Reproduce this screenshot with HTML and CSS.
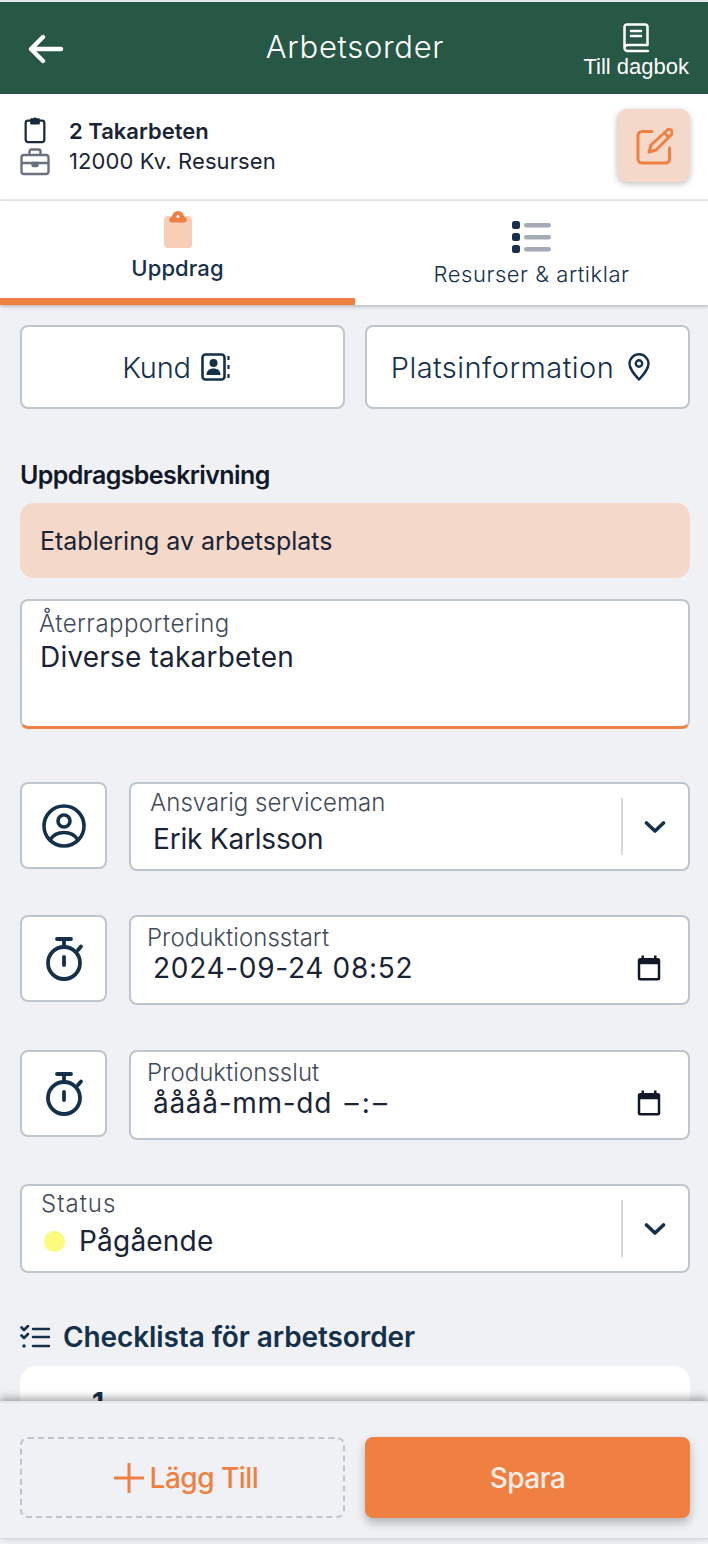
FILE: index.html
```html
<!DOCTYPE html>
<html lang="sv">
<head>
<meta charset="utf-8">
<title>Arbetsorder</title>
<link rel="stylesheet" href="styles.css">
</head>
<body>
<div class="app">
  <header class="topbar">
    <svg class="back" viewBox="0 0 36 30" fill="none" stroke="#fff" stroke-width="4.400" stroke-linecap="round" stroke-linejoin="round"><path d="M33 15H3M15 3 3 15l12 12"/></svg>
    <h1>Arbetsorder</h1>
    <div class="diary">
      <svg viewBox="0 0 26 30" fill="none" stroke="#fff" stroke-width="2.500" stroke-linecap="round" stroke-linejoin="round"><path d="M1.500 24V4a2.500 2.500 0 0 1 2.500-2.500h18a2.500 2.500 0 0 1 2.500 2.500v18H5a3 3 0 0 0-3.500 3 3 3 0 0 0 3.500 3h20M8 8h10M8 13h10"/></svg>
      <span>Till dagbok</span>
    </div>
  </header>

  <section class="info">
    <div class="info-icons">
      <svg class="ic-clip" viewBox="0 0 24 30" fill="none" stroke="#1a2b3c" stroke-width="2.400" stroke-linejoin="round"><rect x="2" y="5" width="20" height="23" rx="2.500"/><path d="M8 3.500h2.500a2 2 0 0 1 3 0H16V8H8z" fill="#1a2b3c"/></svg>
      <svg class="ic-case" viewBox="0 0 30 28" fill="none" stroke="#69717f" stroke-width="2.400" stroke-linejoin="round"><rect x="1.500" y="7" width="27" height="19" rx="2.500"/><path d="M9.500 7V3.500a2 2 0 0 1 2-2h7a2 2 0 0 1 2 2V7M1.500 15h27"/><path d="M12.500 15h5v2a1 1 0 0 1-1 1h-3a1 1 0 0 1-1-1z" fill="#69717f"/></svg>
    </div>
    <div class="info-text">
      <div class="info-title">2 Takarbeten</div>
      <div class="info-sub">12000 Kv. Resursen</div>
    </div>
    <button class="edit">
      <svg viewBox="0 0 38 38" fill="none" stroke="#f08042" stroke-width="3" stroke-linecap="round" stroke-linejoin="round"><path d="M17 4.500H7a4 4 0 0 0-4 4V32a4 4 0 0 0 4 4h23.500a4 4 0 0 0 4-4V21"/><path d="M33 2.500a3.200 3.200 0 0 1 3.500 5L21 23l-7 2 2-7z"/><path d="M29.500 6l3.500 3.500"/></svg>
    </button>
  </section>

  <nav class="tabs">
    <div class="tab active">
      <svg class="tab-clip" viewBox="0 0 28 38"><rect x="0" y="5" width="28" height="32" rx="4" fill="#f9ceb6"/><path d="M8 11.500a2.500 2.500 0 0 1 0-5.500a6 6 0 0 1 12 0a2.500 2.500 0 0 1 0 5.500z" fill="#f08042"/><circle cx="14" cy="5.500" r="1.500" fill="#fff"/></svg>
      <span>Uppdrag</span>
    </div>
    <div class="tab">
      <svg class="tab-list" viewBox="0 0 39 32"><g fill="#14304a"><rect x="0" y="0" width="8" height="8" rx="2.500"/><rect x="0" y="12" width="8" height="8" rx="2.500"/><rect x="0" y="24" width="8" height="8" rx="2.500"/></g><g fill="#a3acb4"><rect x="12" y="2" width="27" height="4.500" rx="2.200"/><rect x="12" y="14" width="27" height="4.500" rx="2.200"/><rect x="12" y="26" width="27" height="4.500" rx="2.200"/></g></svg>
      <span>Resurser &amp; artiklar</span>
    </div>
  </nav>

  <main class="content">
    <div class="two">
      <button class="link-btn">
        <span>Kund</span>
        <svg class="ic-book" viewBox="0 0 30 28" fill="none"><rect x="1.500" y="1.500" width="22" height="25" rx="3" stroke="#14304a" stroke-width="2.600"/><circle cx="12.500" cy="10" r="4" fill="#14304a"/><path d="M5.500 22c0-4.500 3-6.500 7-6.500s7 2 7 6.500z" fill="#14304a"/><path d="M27.500 3v4M27.500 12v4M27.500 21v4" stroke="#14304a" stroke-width="2.200"/></svg>
      </button>
      <button class="link-btn">
        <span>Platsinformation</span>
        <svg class="ic-pin" viewBox="0 0 22 28" fill="none" stroke="#14304a" stroke-width="2.400"><path d="M11 26.500C6 21 1.500 16 1.500 10.800a9.500 9.500 0 0 1 19 0C20.500 16 16 21 11 26.500z" stroke-linejoin="round"/><circle cx="11" cy="10.500" r="3.200"/></svg>
      </button>
    </div>

    <h2 class="section-title">Uppdragsbeskrivning</h2>
    <div class="alert">Etablering av arbetsplats</div>

    <div class="textarea">
      <div class="label">Återrapportering</div>
      <div class="value">Diverse takarbeten</div>
    </div>

    <div class="row row-person">
      <div class="icon-box">
        <svg viewBox="0 0 44 44" class="ic-user" fill="none" stroke="#14304a" stroke-width="3.600"><circle cx="22" cy="22" r="20"/><circle cx="22" cy="17" r="6"/><path d="M8 36c3-5 8-7.500 14-7.500S33 31 36 36"/></svg>
      </div>
      <div class="field select">
        <div class="field-body">
          <div class="label">Ansvarig serviceman</div>
          <div class="value">Erik Karlsson</div>
        </div>
        <div class="sep"></div>
        <svg class="chev" viewBox="0 0 22 14" fill="none" stroke="#14304a" stroke-width="3.600" stroke-linecap="round" stroke-linejoin="round"><path d="M2.500 3 11 11l8.500-8"/></svg>
      </div>
    </div>

    <div class="row row-date">
      <div class="icon-box">
        <svg viewBox="0 0 38 44" class="ic-timer" fill="none" stroke="#14304a" stroke-width="3.800" stroke-linecap="round"><circle cx="18" cy="26" r="16"/><path d="M11 2h14M18 2v8M32 13l3-3.500M18 20v8" /></svg>
      </div>
      <div class="field date">
        <div class="label">Produktionsstart</div>
        <div class="date-line">
          <span class="value mono">2024-09-24 08:52</span>
          <svg class="cal" viewBox="0 0 24 24" fill="#111827"><path d="M19 4h-1V2h-2v2H8V2H6v2H5a2 2 0 0 0-2 2v14a2 2 0 0 0 2 2h14a2 2 0 0 0 2-2V6a2 2 0 0 0-2-2zm0 16H5V9h14z"/></svg>
        </div>
      </div>
    </div>

    <div class="row row-date">
      <div class="icon-box">
        <svg viewBox="0 0 38 44" class="ic-timer" fill="none" stroke="#14304a" stroke-width="3.800" stroke-linecap="round"><circle cx="18" cy="26" r="16"/><path d="M11 2h14M18 2v8M32 13l3-3.500M18 20v8" /></svg>
      </div>
      <div class="field date">
        <div class="label">Produktionsslut</div>
        <div class="date-line">
          <span class="value mono">åååå-mm-dd <span class="time-empty">–:–</span></span>
          <svg class="cal" viewBox="0 0 24 24" fill="#111827"><path d="M19 4h-1V2h-2v2H8V2H6v2H5a2 2 0 0 0-2 2v14a2 2 0 0 0 2 2h14a2 2 0 0 0 2-2V6a2 2 0 0 0-2-2zm0 16H5V9h14z"/></svg>
        </div>
      </div>
    </div>

    <div class="field select status">
      <div class="field-body">
        <div class="label">Status</div>
        <div class="status-line"><i class="dot"></i><span class="value">Pågående</span></div>
      </div>
      <div class="sep"></div>
      <svg class="chev" viewBox="0 0 22 14" fill="none" stroke="#14304a" stroke-width="3.600" stroke-linecap="round" stroke-linejoin="round"><path d="M2.500 3 11 11l8.500-8"/></svg>
    </div>

    <h2 class="check-title">
      <svg viewBox="0 0 30 24" fill="none" stroke="#14304a" stroke-width="2.600" stroke-linecap="round" stroke-linejoin="round"><path d="M1.500 2.500l2.500 2.500L8 1M1.500 10.500 4 13l4-4M13 4h16M13 12h16M13 21h16"/><circle cx="4" cy="21" r="1.700" fill="#14304a" stroke="none"/></svg>
      <span>Checklista för arbetsorder</span>
    </h2>
    <div class="card"><span class="card-num">1</span></div>
  </main>

  <footer class="footer">
    <button class="add">
      <svg viewBox="0 0 30 30" fill="none" stroke="#f08042" stroke-width="3" stroke-linecap="round"><path d="M15 1v28M1 15h28"/></svg>
      <span>Lägg Till</span>
    </button>
    <button class="save">Spara</button>
  </footer>
</div>
</body>
</html>
```
FILE: styles.css
```css
* { box-sizing: border-box; }
html, body { margin: 0; padding: 0; }
body {
  width: 708px;
  height: 1544px;
  overflow: hidden;
  font-family: Inter, "Noto Sans", "Liberation Sans", sans-serif;
  color: #14304a;
  background: #eff1f5;
}
button { font: inherit; color: inherit; padding: 0; cursor: pointer; }
.app { display: flex; flex-direction: column; height: 1544px; }

.topbar {
  flex: none;
  height: 94px;
  border-top: 2px solid #e5e7eb;
  background: #275745;
  color: #fff;
  display: grid;
  grid-template-columns: minmax(0, 1fr) auto minmax(0, 1fr);
  align-items: center;
  padding: 0 19px 0 28px;
}
.back { width: 36px; height: 30px; margin-top: 1px; }
.topbar h1 {
  margin: 0 7px 3px 0;
  text-align: center;
  font-size: 31px;
  font-weight: 300;
  letter-spacing: 0.7px;
}
.diary {
  justify-self: end;
  display: flex;
  flex-direction: column;
  align-items: center;
  padding-top: 6px;
  font-family: "Liberation Sans", sans-serif;
  font-size: 22px;
  line-height: 24px;
  gap: 2px;
  white-space: nowrap;
}
.diary svg { width: 26px; height: 30px; }

.info {
  flex: none;
  height: 105px;
  background: #fff;
  display: flex;
  align-items: center;
  padding: 0 18px 0 20px;
}
.info-icons { width: 30px; display: flex; flex-direction: column; align-items: center; gap: 4px; margin-bottom: 1px; }
.ic-clip { width: 24px; height: 28px; }
.ic-case { width: 30px; height: 28px; }
.info-text { flex: 1; margin-left: 19px; margin-bottom: 2px; color: #1a2436; }
.info-title { font-size: 22px; font-weight: 600; line-height: 30px; letter-spacing: 0; }
.info-sub { font-size: 22px; line-height: 30px; letter-spacing: 0.1px; }
.edit {
  width: 73px;
  height: 73px;
  margin-bottom: 2px;
  border: 0;
  border-radius: 10px;
  background: #f4d9ca;
  box-shadow: 0 2px 6px rgba(0,0,0,.25);
  display: flex;
  align-items: center;
  justify-content: center;
}
.edit svg { width: 38px; height: 38px; }

.tabs {
  flex: none;
  height: 104px;
  margin-top: 2px;
  background: #fff;
  display: grid;
  grid-template-columns: 355px 1fr;
  box-shadow: 0 1px 4px rgba(0,0,0,.3);
  position: relative;
  z-index: 1;
}
.tab { display: flex; flex-direction: column; align-items: center; }
.tab span { font-size: 22px; font-weight: 350; letter-spacing: 0.55px; }
.tab.active { border-bottom: 7px solid #f08042; padding-top: 10px; }
.tab.active span { font-weight: 500; line-height: 30px; margin-top: 4px; letter-spacing: 0.1px; }
.tab-clip { width: 28px; height: 38px; }
.tab:not(.active) { padding-top: 20px; }
.tab:not(.active) span { line-height: 30px; margin-top: 6px; }
.tab-list { width: 39px; height: 32px; }

.content {
  flex: 1;
  min-height: 0;
  overflow: hidden;
  padding: 20px 18px 0 20px;
}
.two { display: grid; grid-template-columns: 1fr 1fr; gap: 20px; }
.link-btn {
  height: 84px;
  border: 2px solid #bcc6cc;
  border-radius: 8px;
  background: #fff;
  display: flex;
  align-items: center;
  justify-content: center;
  gap: 10px;
  padding-right: 14px;
  font-size: 29px;
  font-weight: 350;
  letter-spacing: 0.45px;
}
.link-btn:first-child { letter-spacing: -0.2px; padding-right: 12px; }
.ic-book { width: 30px; height: 28px; }
.ic-pin { width: 22px; height: 28px; margin-left: 4px; }
.section-title {
  margin: 50px 0 12px;
  font-size: 25px;
  line-height: 32px;
  font-weight: 600;
  color: #111827;
  letter-spacing: -0.6px;
}
.alert {
  height: 75px;
  border-radius: 14px;
  background: #f4d9ca;
  display: flex;
  align-items: center;
  padding-left: 20px;
  font-size: 25px;
  color: #1a2436;
}
.textarea {
  margin-top: 21px;
  height: 130px;
  background: #fff;
  border: 2px solid #bcc6cc;
  border-bottom: 3px solid #f08042;
  border-radius: 8px;
  padding: 9px 18px;
}
.textarea .label { margin-left: -1px; letter-spacing: 0.45px; }
.textarea .value { margin-top: 1px; }
.label { font-size: 24px; line-height: 28px; color: #3f4a5a; letter-spacing: 0.05px; font-weight: 350; }
.value { font-size: 28px; line-height: 36px; color: #1a2436; letter-spacing: 0.2px; }

.row { display: flex; gap: 22px; align-items: flex-start; }
.row-person { margin-top: 53px; }
.row-person .value { letter-spacing: -0.2px; }
.row-date { margin-top: 44px; }
.row-date + .row-date { margin-top: 45px; }
.icon-box {
  flex: none;
  width: 87px;
  height: 87px;
  border: 2px solid #bcc6cc;
  border-radius: 8px;
  background: #fff;
  display: flex;
  align-items: center;
  justify-content: center;
}
.ic-user { width: 44px; height: 44px; }
.ic-timer { width: 38px; height: 44px; margin-left: 3px; }
.field {
  flex: 1;
  background: #fff;
  border: 2px solid #bcc6cc;
  border-radius: 8px;
}
.select {
  height: 89px;
  display: flex;
  align-items: center;
  padding-left: 19px;
}
.field-body { flex: 1; align-self: flex-start; padding-top: 5px; }
.field-body .value { margin-left: 3px; display: block; margin-top: 4px; }
.sep { width: 2px; height: 57px; background: #d5d9dc; margin: 0 21px 0 0; }
.chev { width: 22px; height: 14px; margin-right: 22px; }
.date { height: 90px; padding: 8px 24px 0 16px; }
.date .label { line-height: 25px; }
.date-line { display: flex; justify-content: space-between; align-items: center; padding-left: 6px; }
.mono { letter-spacing: 0.7px; }
.time-empty { letter-spacing: 3.2px; margin-left: 4px; }
.cal { width: 30px; height: 30px; }
.status { flex: none; margin-top: 44px; height: 89px; }
.status .field-body { padding-top: 4px; }
.status .label { letter-spacing: 1px; }
.status .value { margin: 0; display: inline; }
.status-line { display: flex; align-items: center; gap: 14px; padding-left: 3px; margin-top: 5px; }
.dot { width: 21px; height: 21px; border-radius: 50%; background: #fbfb7d; }
.check-title {
  margin: 46px 0 11px;
  display: flex;
  align-items: center;
  gap: 13px;
  font-size: 28px;
  line-height: 36px;
  font-weight: 600;
  letter-spacing: -0.1px;
}
.check-title svg { width: 30px; height: 24px; }
.card { height: 120px; background: #fff; border-radius: 16px; padding: 20px 0 0 72px; font-size: 28px; font-weight: 700; }

.footer {
  flex: none;
  height: 138px;
  margin-bottom: 5px;
  background: #eff1f5;
  border-top: 2px solid #e5e7eb;
  border-bottom: 1px solid #d6d9df;
  box-shadow: 0 -3px 8px rgba(0,0,0,.35);
  display: grid;
  grid-template-columns: 1fr 1fr;
  gap: 20px;
  padding: 34px 18px 0 20px;
  position: relative;
  z-index: 2;
}
.add, .save { height: 81px; border-radius: 8px; font-size: 28px; letter-spacing: -0.5px; }
.add {
  background: transparent;
  border: 2px dashed #bcc6cc;
  color: #f08042;
  font-weight: 500;
  display: flex;
  align-items: center;
  justify-content: center;
  gap: 6px;
  padding-left: 7px;
}
.add svg { width: 30px; height: 30px; }
.save {
  border: 0;
  background: #f08042;
  color: #fbeee6;
  font-weight: 500;
  box-shadow: 0 5px 10px rgba(0,0,0,.25);
}
```
